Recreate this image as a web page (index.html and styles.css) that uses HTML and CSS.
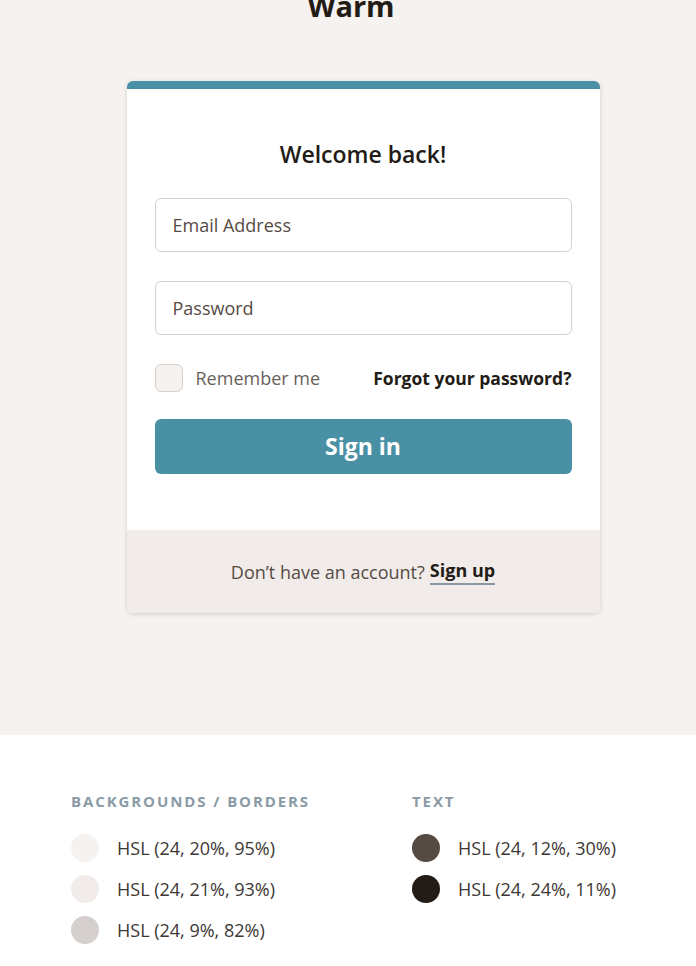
FILE: index.html
```html
<!DOCTYPE html>
<html>
<head>
<meta charset="utf-8">
<link rel="stylesheet" href="styles.css">
</head>
<body>
<section class="stage">
  <h1 class="title">Warm</h1>
  <div class="card">
    <div class="card-body">
      <h2 class="heading">Welcome back!</h2>
      <div class="field">Email Address</div>
      <div class="field">Password</div>
      <div class="row">
        <label class="remember"><span class="check"></span>Remember me</label>
        <a class="forgot">Forgot your password?</a>
      </div>
      <button class="btn">Sign in</button>
    </div>
    <div class="card-foot">
      Don’t have an account? <a class="signup">Sign up</a>
    </div>
  </div>
</section>
<section class="palette">
  <div class="group">
    <div class="label">BACKGROUNDS / BORDERS</div>
    <div class="swatch"><span class="dot c1"></span>HSL (24, 20%, 95%)</div>
    <div class="swatch"><span class="dot c2"></span>HSL (24, 21%, 93%)</div>
    <div class="swatch"><span class="dot c3"></span>HSL (24, 9%, 82%)</div>
  </div>
  <div class="group">
    <div class="label">TEXT</div>
    <div class="swatch"><span class="dot c4"></span>HSL (24, 12%, 30%)</div>
    <div class="swatch"><span class="dot c5"></span>HSL (24, 24%, 11%)</div>
  </div>
</section>
</body>
</html>
```
FILE: styles.css
```css
* { box-sizing: border-box; }
body {
  margin: 0;
  font-family: "Open Sans", "Lato", sans-serif;
  color: hsl(24, 24%, 11%);
  background: #fff;
}
.stage {
  background: hsl(24, 20%, 95%);
  height: 735px;
  overflow: hidden;
  display: flex;
  flex-direction: column;
  align-items: center;
}
.title {
  margin: -13px 0 0;
  font-size: 29px;
  line-height: 38px;
  font-weight: 700;
  color: hsl(24, 24%, 11%);
  transform: translateX(3px);
}
.card {
  margin-top: 56px;
  margin-left: 30px;
  width: 473px;
  background: #fff;
  border-top: 8px solid #4a90a4;
  border-radius: 6px;
  box-shadow: 0 1px 4px rgba(60, 40, 30, 0.18);
  overflow: hidden;
}
.card-body {
  padding: 49px 28px 56px;
  display: flex;
  flex-direction: column;
}
.heading {
  margin: 0 0 28px;
  text-align: center;
  font-size: 23px;
  line-height: 32px;
  font-weight: 600;
}
.field {
  height: 54px;
  border: 1.5px solid hsl(24, 9%, 82%);
  border-radius: 6px;
  padding: 0 17px;
  display: flex;
  align-items: center;
  font-size: 18px;
  color: hsl(24, 12%, 30%);
  margin-bottom: 29px;
}
.row {
  display: flex;
  justify-content: space-between;
  align-items: center;
  height: 28px;
  margin-bottom: 27px;
}
.remember {
  display: flex;
  align-items: center;
  font-size: 18px;
  color: hsl(24, 8%, 38%);
}
.check {
  width: 28px;
  height: 28px;
  border-radius: 6px;
  background: hsl(24, 20%, 95%);
  border: 1.5px solid hsl(24, 9%, 82%);
  margin-right: 13px;
}
.forgot {
  font-size: 17.5px;
  font-weight: 700;
  color: hsl(24, 24%, 11%);
}
.btn {
  height: 55px;
  border: 0;
  border-radius: 6px;
  background: #4a90a4;
  color: #fff;
  font-family: inherit;
  font-size: 23px;
  font-weight: 700;
  padding-bottom: 3px;
}
.card-foot {
  background: hsl(24, 21%, 93%);
  height: 83px;
  display: flex;
  align-items: center;
  justify-content: center;
  font-size: 18px;
  color: hsl(24, 12%, 30%);
  padding-top: 0;
}
.signup {
  margin-left: 5px;
  font-weight: 700;
  color: hsl(24, 24%, 11%);
  border-bottom: 2px solid #8a98a3;
  line-height: 25px;
}
.palette {
  display: flex;
  padding: 56px 0 0 71px;
}
.group:first-child { width: 341px; }
.label {
  font-size: 15px;
  font-weight: 700;
  letter-spacing: 1.9px;
  color: #8a9ba6;
  margin-bottom: 23px;
  line-height: 20px;
}
.swatch {
  display: flex;
  align-items: center;
  height: 28px;
  margin-bottom: 13px;
  font-size: 18px;
  color: hsl(24, 8%, 22%);
}
.dot {
  width: 28px;
  height: 28px;
  border-radius: 50%;
  margin-right: 18px;
}
.c1 { background: hsl(24, 20%, 95%); }
.c2 { background: hsl(24, 21%, 93%); }
.c3 { background: hsl(24, 9%, 82%); }
.c4 { background: hsl(24, 12%, 30%); }
.c5 { background: hsl(24, 24%, 11%); }
```
